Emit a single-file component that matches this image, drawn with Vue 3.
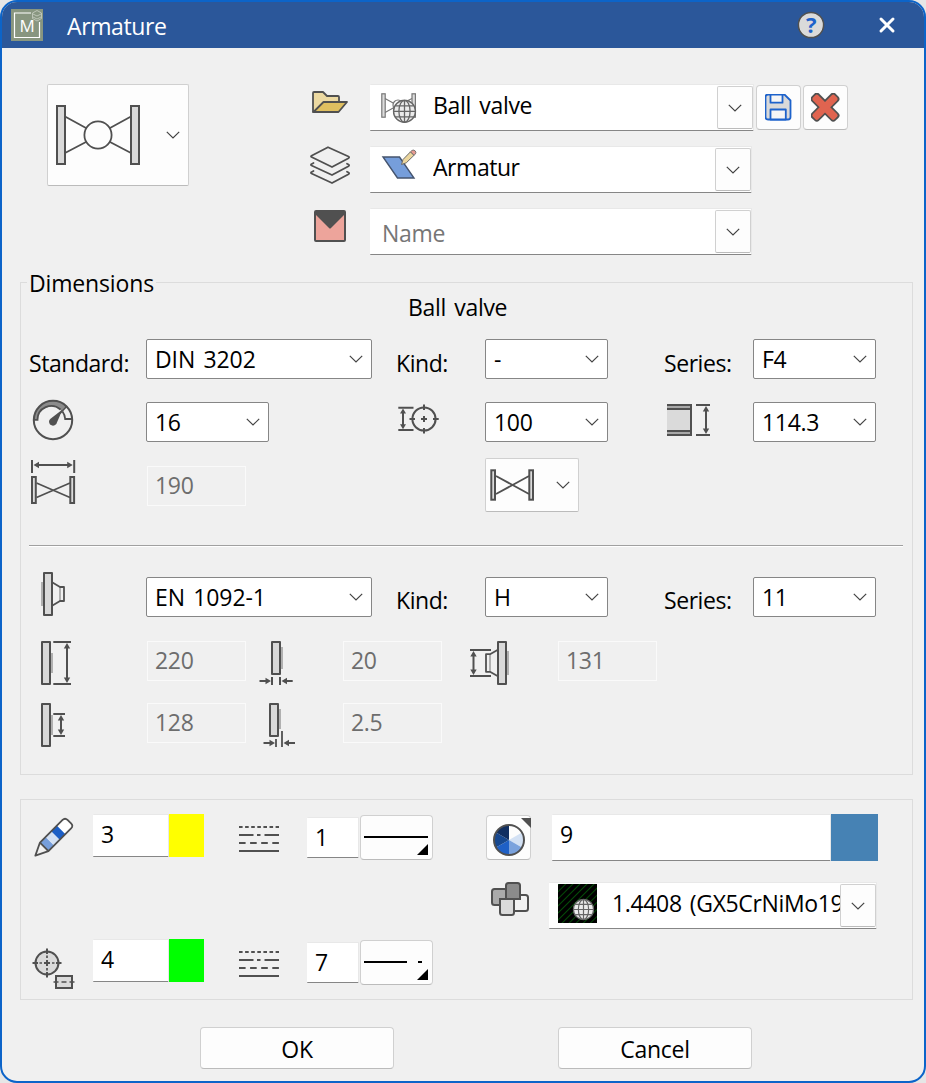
<template>
  <div class="dialog">
    <!-- Shapes used by several icons -->
    <svg class="defs" width="0" height="0">
      <symbol id="chevron" viewBox="0 0 14 8">
        <path d="M0.8 0.8 L7 7 L13.2 0.8" fill="none" stroke="#444" stroke-width="1.2" />
      </symbol>
      <symbol id="globe" viewBox="0 0 24 24">
        <circle cx="12" cy="12" r="11" fill="#ebebeb" stroke="#666" stroke-width="1.4" />
        <g fill="none" stroke="#666" stroke-width="1.3">
          <ellipse cx="12" cy="12" rx="5.6" ry="11" />
          <path d="M12 1 V23 M1 12 H23 M3 6.5 H21 M3 17.5 H21" />
        </g>
      </symbol>
      <symbol id="linetypes" viewBox="0 0 42 28">
        <g stroke="#505050" stroke-width="2">
          <path d="M1 2 H41" stroke-dasharray="3.6 2.5" />
          <path d="M1 10 H15.5 M19 10 H22.5 M26.5 10 H41" />
          <path d="M1 18 H41" stroke-dasharray="6.6 4.5" />
          <path d="M1 26 H41" />
        </g>
      </symbol>
      <pattern id="hatch" width="5" height="5" patternUnits="userSpaceOnUse" patternTransform="rotate(45)">
        <rect width="5" height="5" fill="#000" />
        <rect width="1" height="5" fill="#044a07" />
      </pattern>
    </svg>

    <header class="titlebar">
      <svg class="logo" width="32" height="32" viewBox="0 0 32 32">
        <rect width="32" height="32" fill="#889680" />
        <path d="M20 4 H3.5 V28.5 H28.5 V13" fill="none" stroke="#fff" stroke-width="1.2" />
        <g fill="none" stroke="#c3cbbd" stroke-width="0.9">
          <path d="M26 1.5 L30.5 4 V9.5 L26 12 L21.5 9.5 V4 Z" />
          <path d="M22 5 L26 7 L30 5 M22 8 L26 10 L30 8" />
        </g>
        <text x="16" y="22.7" text-anchor="middle" class="logo-text">M</text>
      </svg>
      <h1 class="title">{{ title }}</h1>
      <button class="title-button help">
        <svg width="28" height="28" viewBox="0 0 28 28">
          <circle cx="14" cy="14" r="12.6" fill="#dadada" stroke="#505050" stroke-width="1.5" />
          <text x="14" y="22" text-anchor="middle" class="help-text">?</text>
        </svg>
      </button>
      <button class="title-button close">
        <svg width="18" height="18" viewBox="0 0 18 18">
          <path d="M3 3 L15 15 M15 3 L3 15" stroke="#fff" stroke-width="3" stroke-linecap="round" />
        </svg>
      </button>
    </header>

    <section class="top">
      <button class="button preview">
        <svg width="104" height="64" viewBox="46 103 104 64">
          <g fill="#d9d9d9" stroke="#505050" stroke-width="2">
            <rect x="57" y="106" width="8" height="58" />
            <rect x="131" y="106" width="8" height="58" />
          </g>
          <g fill="none" stroke="#505050" stroke-width="1.8">
            <circle cx="98" cy="135" r="13.6" />
            <path d="M65 116.5 L86 128 M65 153 L86 142 M131 116.5 L110 128 M131 153 L110 142" />
          </g>
        </svg>
        <svg class="chevron"><use href="#chevron" /></svg>
      </button>

      <div class="sources">
        <div class="source">
          <svg class="source-icon" viewBox="300 84 70 47">
            <g stroke="#505050" stroke-width="1.8" stroke-linejoin="round">
              <path d="M313 112 V93 Q313 92 314 92 H323 L327 96 H338 Q339 96 339 97 V103 Z" fill="#ecd9a1" />
              <path d="M313.5 112 L323.5 102 H347 L338.5 112 Z" fill="#dfbf60" />
            </g>
          </svg>
          <div class="combo wide">
            <svg class="combo-icon" viewBox="370 85 63 45">
              <g fill="#dcdcdc" stroke="#777" stroke-width="1.2">
                <rect x="381.8" y="93.8" width="3.4" height="23.4" />
                <rect x="412" y="93.8" width="3.4" height="23.4" />
                <path d="M385 98.5 L395 104 M385 112.5 L395 107 M402 103.5 L412 98.5" />
                <circle cx="398" cy="105" r="5" fill="#fff" />
              </g>
              <use href="#globe" x="392.5" y="99.3" width="24" height="24" />
            </svg>
            <span class="combo-text">{{ component }}</span>
            <button class="button drop"><svg class="chevron"><use href="#chevron" /></svg></button>
          </div>
          <button class="button tool">
            <svg width="28" height="28" viewBox="765 94 28 28">
              <g stroke="#1d62cb" stroke-width="1.8" stroke-linejoin="round">
                <path d="M768 94.5 H784.5 L790.5 100.5 V117 Q790.5 119.5 788 119.5 H768 Q765.5 119.5 765.5 117 V97 Q765.5 94.5 768 94.5 Z" fill="#d9d9d9" />
                <path d="M770.5 94.5 H782.5 V102.7 H770.5 Z" fill="#f6f6f6" />
                <path d="M770.5 109.5 H785.8 V119.5 H770.5 Z" fill="#f6f6f6" />
              </g>
            </svg>
          </button>
          <button class="button tool">
            <svg width="30" height="30" viewBox="-14 -14.2 30 30">
              <g fill="#505050">
                <rect x="-17" y="-5.4" width="34" height="10.8" rx="3.5" transform="rotate(45)" />
                <rect x="-17" y="-5.4" width="34" height="10.8" rx="3.5" transform="rotate(-45)" />
              </g>
              <g fill="#e06450">
                <rect x="-15.3" y="-3.7" width="30.6" height="7.4" rx="2" transform="rotate(45)" />
                <rect x="-15.3" y="-3.7" width="30.6" height="7.4" rx="2" transform="rotate(-45)" />
              </g>
            </svg>
          </button>
        </div>

        <div class="source">
          <svg class="source-icon" viewBox="300 146 70 47">
            <g fill="none" stroke="#505050" stroke-width="1.8" stroke-linejoin="round" stroke-linecap="round">
              <path d="M328 147.2 L348.5 156.5 Q349.8 157.3 348.5 158.2 L332 167 L311.5 157 Q310.5 156.5 311.5 155.8 Z" />
              <path d="M313.5 163 L311.3 164.2 Q310.5 165 311.5 165.5 L332 175 L348.5 166.2 Q349.8 165.2 348.5 164.5 L347 163.7" />
              <path d="M313.5 171 L311.3 172.2 Q310.5 173 311.5 173.5 L332 183 L348.5 174.2 Q349.8 173.2 348.5 172.5 L347 171.7" />
            </g>
          </svg>
          <div class="combo">
            <svg class="combo-icon" viewBox="370 147 63 45">
              <path d="M383 157 H399.5 L414 178 H397.5 Z" fill="#769edb" stroke="#45546e" stroke-width="1.4" />
              <path d="M401.5 164.5 L403 159.5 L410.5 151.8 L414 155.3 L406.3 162.8 Z" fill="#ecd69d" stroke="#6b6b6b" stroke-width="1" />
              <path d="M410.5 151.8 L412 150.4 Q414 149.5 415.3 151 Q416.5 152.5 415.4 153.9 L414 155.3 Z" fill="#e79a90" stroke="#6b6b6b" stroke-width="0.9" />
            </svg>
            <span class="combo-text layer">{{ layer }}</span>
            <button class="button drop"><svg class="chevron"><use href="#chevron" /></svg></button>
          </div>
        </div>

        <div class="source">
          <svg class="source-icon" viewBox="300 208 70 47">
            <rect x="315" y="211" width="30" height="30" rx="1" fill="#eda49b" stroke="#505050" stroke-width="2" />
            <path d="M315 211 H345 V214 L331 228 Q330 229 329 228 L315 214 Z" fill="#505050" />
          </svg>
          <div class="combo">
            <input v-model="name" class="name-input" placeholder="Name" />
            <button class="button drop"><svg class="chevron"><use href="#chevron" /></svg></button>
          </div>
        </div>
      </div>
    </section>

    <fieldset class="group dimensions">
      <legend>Dimensions</legend>
      <div class="subtitle">{{ component }}</div>

      <div class="row">
        <span class="label">Standard:</span>
        <div class="select long">{{ body.standard }}<svg class="chevron"><use href="#chevron" /></svg></div>
        <span class="label">Kind:</span>
        <div class="select">{{ body.kind }}<svg class="chevron"><use href="#chevron" /></svg></div>
        <span class="label">Series:</span>
        <div class="select">{{ body.series }}<svg class="chevron"><use href="#chevron" /></svg></div>
      </div>

      <div class="row pressure">
        <svg class="icon" width="60" height="40" viewBox="29 402 60 40">
          <path d="M34 420 A19 19 0 0 1 66.5 406 L61.5 411 A13.8 13.8 0 0 0 37.7 420 Z" fill="#8c8c8c" />
          <g fill="none" stroke="#505050" stroke-width="2">
            <circle cx="53" cy="420" r="19.2" />
            <path d="M34 419.8 H37.5 A13.8 13.8 0 0 1 60.5 409.5 M62.5 411.5 Q65 415 65.2 419 H72" stroke-width="1.8" />
            <path d="M67 406 L60 413.5" stroke-width="1.6" />
          </g>
          <path d="M62.5 409.5 L56.3 424 Q53.5 427 50 424.5 Q47.8 421 50.5 418.8 Z" fill="#505050" />
        </svg>
        <div class="select">{{ body.pressure }}<svg class="chevron"><use href="#chevron" /></svg></div>
        <svg class="icon" width="60" height="40" viewBox="396 402 60 40">
          <g fill="none" stroke="#505050" stroke-width="2">
            <path d="M398.3 407.7 H413.5 M398.3 430 H413.5 M403 412 V426" />
            <circle cx="424" cy="419" r="11.6" />
            <path d="M424 404.5 V410 M424 428 V433.5 M409.5 419 H415 M433 419 H438.7 M424 416 V422 M421 419 H427" />
          </g>
          <path d="M403 408.5 L406 413.5 H400 Z M403 429.3 L406 424.3 H400 Z" fill="#505050" />
        </svg>
        <div class="select">{{ body.diameter }}<svg class="chevron"><use href="#chevron" /></svg></div>
        <svg class="icon" width="60" height="40" viewBox="664 402 60 40">
          <rect x="667" y="404" width="24" height="32" fill="#dadada" />
          <path d="M667 407 H690 M667 433 H690" stroke="#a8a8a8" stroke-width="2" />
          <g fill="none" stroke="#505050" stroke-width="2">
            <path d="M667 405 H691 V435 H667 M667 409 H690 M667 431 H690" />
            <path d="M696 405 H710 M696 435 H710 M706 410 V430" />
          </g>
          <path d="M706 406 L709.2 411.5 H702.8 Z M706 434 L709.2 428.5 H702.8 Z" fill="#505050" />
        </svg>
        <div class="select">{{ body.outer }}<svg class="chevron"><use href="#chevron" /></svg></div>
      </div>

      <div class="row length">
        <svg class="icon" width="60" height="54" viewBox="29 458 60 54">
          <g fill="none" stroke="#505050" stroke-width="2">
            <path d="M32 460 V473 M74.2 460 V473 M38 465 H69" />
            <path d="M36.5 483 L70 497.5 M36.5 497.5 L70 483" stroke-width="1.7" />
            <rect x="32" y="477" width="3.8" height="26" fill="#dcdcdc" />
            <rect x="70.3" y="477" width="3.8" height="26" fill="#dcdcdc" />
          </g>
          <path d="M33.5 465 L39 461.7 V468.3 Z M72.7 465 L67.2 461.7 V468.3 Z" fill="#505050" />
        </svg>
        <div class="readonly">{{ body.length }}</div>
        <span></span>
        <button class="button variant">
          <svg width="54" height="40" viewBox="486 465 54 40">
            <g fill="#dcdcdc" stroke="#505050" stroke-width="2">
              <path d="M496 476 L529 494 M496 494 L529 476" stroke-width="1.8" />
              <rect x="491.3" y="470.3" width="3.7" height="29.4" />
              <rect x="529.3" y="470.3" width="3.7" height="29.4" />
            </g>
          </svg>
          <svg class="chevron"><use href="#chevron" /></svg>
        </button>
      </div>

      <hr class="divider" />

      <div class="row flange">
        <svg class="icon" width="60" height="40" viewBox="29 577 60 40">
          <rect x="41" y="582" width="2.5" height="24" fill="#b0b0b0" />
          <path d="M60 587 V601" stroke="#b0b0b0" stroke-width="2" />
          <g fill="none" stroke="#505050" stroke-width="2" stroke-linejoin="round">
            <rect x="44" y="573" width="8" height="42" fill="#d9d9d9" />
            <path d="M52.5 582.5 L60 587 H64 V601 H60 L52.5 605.5" stroke-width="1.8" />
          </g>
        </svg>
        <div class="select long">{{ flange.standard }}<svg class="chevron"><use href="#chevron" /></svg></div>
        <span class="label">Kind:</span>
        <div class="select">{{ flange.kind }}<svg class="chevron"><use href="#chevron" /></svg></div>
        <span class="label">Series:</span>
        <div class="select">{{ flange.series }}<svg class="chevron"><use href="#chevron" /></svg></div>
      </div>

      <div class="row sizes">
        <svg class="icon" width="60" height="40" viewBox="29 641 60 40">
          <rect x="51" y="653" width="2" height="20" fill="#b0b0b0" />
          <g fill="none" stroke="#505050" stroke-width="2" stroke-linejoin="round">
            <rect x="42" y="642" width="8" height="42" fill="#d9d9d9" />
            <path d="M53.3 642 H71 M53.3 684 H71 M67 647 V679" />
          </g>
          <path d="M67 643 L70.2 648.5 H63.8 Z M67 683 L70.2 677.5 H63.8 Z" fill="#505050" />
        </svg>
        <div class="readonly">{{ flange.outer }}</div>
        <svg class="icon" width="60" height="40" viewBox="259 641 60 40">
          <rect x="281" y="647" width="2" height="22" fill="#b0b0b0" />
          <g fill="none" stroke="#505050" stroke-width="2" stroke-linejoin="round">
            <rect x="272" y="642" width="8" height="32" fill="#d9d9d9" />
            <path d="M272 677 V685 M280 677 V685 M259.5 681 H267 M285 681 H292.7" />
          </g>
          <path d="M271 681 L265.5 677.8 V684.2 Z M281.5 681 L287 677.8 V684.2 Z" fill="#505050" />
        </svg>
        <div class="readonly">{{ flange.thickness }}</div>
        <svg class="icon" width="60" height="40" viewBox="469 641 60 40">
          <rect x="507" y="651" width="2" height="24" fill="#b0b0b0" />
          <path d="M490 655 V671" stroke="#b0b0b0" stroke-width="2" />
          <g fill="none" stroke="#505050" stroke-width="2" stroke-linejoin="round">
            <rect x="498" y="642" width="8" height="42" fill="#d9d9d9" />
            <path d="M497.5 650 L490 654.2 H486 V671.8 H490 L497.5 676" stroke-width="1.8" />
            <path d="M470 650 H491 M470 676 H491 M473.5 655 V671" />
          </g>
          <path d="M473.5 651 L476.7 656.5 H470.3 Z M473.5 675 L476.7 669.5 H470.3 Z" fill="#505050" />
        </svg>
        <div class="readonly">{{ flange.neck }}</div>
      </div>

      <div class="row sizes">
        <svg class="icon" width="60" height="40" viewBox="29 703 60 40">
          <rect x="51" y="715" width="2" height="20" fill="#b0b0b0" />
          <g fill="none" stroke="#505050" stroke-width="2" stroke-linejoin="round">
            <rect x="42" y="704" width="8" height="42" fill="#d9d9d9" />
            <path d="M53.3 714 H65 M53.3 736 H65 M61 719 V731" />
          </g>
          <path d="M61 715 L64.2 720.5 H57.8 Z M61 735 L64.2 729.5 H57.8 Z" fill="#505050" />
        </svg>
        <div class="readonly">{{ flange.facing }}</div>
        <svg class="icon" width="60" height="40" viewBox="259 703 60 40">
          <rect x="279" y="709" width="2" height="20" fill="#b0b0b0" />
          <g fill="none" stroke="#505050" stroke-width="2" stroke-linejoin="round">
            <rect x="270" y="704" width="8" height="32" fill="#d9d9d9" />
            <path d="M276 739 V747 M282 731 V747 M263.5 743 H271 M288 743 H295" stroke-width="1.8" />
          </g>
          <path d="M275 743 L269.5 739.8 V746.2 Z M283.5 743 L289 739.8 V746.2 Z" fill="#505050" />
        </svg>
        <div class="readonly">{{ flange.step }}</div>
      </div>
    </fieldset>

    <section class="group styles">
      <div class="pens">
        <div v-for="pen in pens" :key="pen.id" class="pen">
          <svg v-if="pen.id === 'outline'" class="icon" width="63" height="46" viewBox="30 814 63 46">
            <g transform="translate(35 856) rotate(-45)">
              <rect x="13" y="-6" width="8" height="12" fill="#769edb" />
              <rect x="21" y="-6" width="8" height="12" fill="#d3e1f4" />
              <rect x="29" y="-6" width="8" height="12" fill="#1c5fc6" />
              <path d="M37 -6 H45 Q48.5 -6 48.5 -2.5 V2.5 Q48.5 6 45 6 H37 Z" fill="#fff" />
              <path d="M0.5 0 L13 -6 H45 Q48.5 -6 48.5 -2.5 V2.5 Q48.5 6 45 6 H13 Z M13 -6 V6" fill="none" stroke="#505050" stroke-width="1.8" stroke-linejoin="round" />
            </g>
          </svg>
          <svg v-else class="icon" width="63" height="46" viewBox="30 939 63 46">
            <g fill="#dadada" stroke="#505050" stroke-width="2">
              <circle cx="47" cy="963" r="11.5" />
              <rect x="56" y="976" width="16" height="12" />
              <path d="M47 948.5 V954 M47 972 V977.5 M32.5 963 H38 M56 963 H61.5 M44 963 H50 M47 960 V966" />
              <path d="M47 955.5 V958 M47 968 V970.5 M39.5 963 H42 M52 963 H54.5 M53.5 982 H58.5 M61.5 982 H66.5 M69.5 982 H74.5" stroke-width="1.7" />
            </g>
          </svg>
          <div class="field color-field"><input v-model="pen.color" /></div>
          <span class="swatch" :style="{ backgroundColor: pen.hex }"></span>
          <svg class="linetypes"><use href="#linetypes" /></svg>
          <div class="field type-field"><input v-model="pen.type" /></div>
          <button class="button line-button">
            <svg width="71" height="43" viewBox="361 816 71 43">
              <path :d="pen.line" stroke="#000" stroke-width="2" />
              <path d="M428 844 V855 H417 Z" fill="#000" />
            </svg>
          </button>
        </div>
      </div>

      <div class="fills">
        <div class="fill-row">
          <button class="button tool wheel">
            <svg width="45" height="45" viewBox="486 815 45 45">
              <g transform="translate(509 840)">
                <path
                  v-for="(shade, i) in shades"
                  :key="shade"
                  d="M0 0 V-15 A15 15 0 0 1 12.99 -7.5 Z"
                  :fill="shade"
                  :transform="`rotate(${i * 60})`"
                />
                <circle r="15" fill="none" stroke="#505050" stroke-width="2" />
              </g>
              <path d="M521 818 H531 V828 Z" fill="#505050" />
            </svg>
          </button>
          <div class="field fill-field"><input v-model="fillColor" /></div>
          <span class="swatch large"></span>
        </div>
        <div class="fill-row material">
          <svg class="icon" width="63" height="47" viewBox="486 882 63 47">
            <g stroke="#505050" stroke-width="2">
              <rect x="492" y="889" width="15" height="16" rx="2.5" fill="#aaa" />
              <rect x="512" y="895" width="16" height="16" rx="2.5" fill="#f2f2f2" />
              <path d="M506 899 V885.5 Q506 883 508.5 883 H517.5 Q520 883 520 885.5 V899 Z" fill="#8b8b8b" />
              <path d="M500 899 H514 V912.5 Q514 915 511.5 915 H502.5 Q500 915 500 912.5 Z" fill="#dadada" />
            </g>
          </svg>
          <div class="combo material-combo">
            <svg class="material-icon" width="39" height="39" viewBox="0 0 39 39">
              <rect width="39" height="39" fill="url(#hatch)" />
              <use href="#globe" x="14.5" y="14.5" width="22" height="22" />
            </svg>
            <span class="combo-text">{{ material }}</span>
            <button class="button drop"><svg class="chevron"><use href="#chevron" /></svg></button>
          </div>
        </div>
      </div>
    </section>

    <footer class="actions">
      <button class="button action">OK</button>
      <button class="button action">Cancel</button>
    </footer>
  </div>
</template>

<script setup>
import { ref, reactive } from "vue";

const title = "Armature";
const component = ref("Ball valve");
const layer = ref("Armatur");
const name = ref("");

const body = reactive({
  standard: "DIN 3202",
  kind: "-",
  series: "F4",
  pressure: "16",
  diameter: "100",
  outer: "114.3",
  length: "190",
});

const flange = reactive({
  standard: "EN 1092-1",
  kind: "H",
  series: "11",
  outer: "220",
  thickness: "20",
  neck: "131",
  facing: "128",
  step: "2.5",
});

const pens = reactive([
  { id: "outline", color: "3", hex: "#ffff00", type: "1", line: "M364 837 H428" },
  { id: "center", color: "4", hex: "#00ff00", type: "7", line: "M364 837 H407 M418 837 H422" },
]);

const shades = ["#fcfcfc", "#d3e1f4", "#7aa2dd", "#1f60c6", "#17488f", "#112f61"];
const fillColor = ref("9");
const material = ref("1.4408 (GX5CrNiMo19");
</script>

<style>
body {
  background: #e6e6e6;
}
</style>

<style scoped>
.dialog {
  box-sizing: border-box;
  width: 926px;
  height: 1083px;
  border: 2px solid #0c64c9;
  border-radius: 17px;
  background: #f0f0f0;
  overflow: hidden;
  display: flex;
  flex-direction: column;
  font-family: "Open Sans", "Noto Sans", sans-serif;
  font-size: 23px;
  line-height: 30px;
  letter-spacing: -0.3px;
  word-spacing: 2.5px;
  color: #000;
}

.dialog *,
.dialog *::before {
  box-sizing: border-box;
}

.defs {
  position: absolute;
}

button,
input {
  font: inherit;
  letter-spacing: inherit;
  color: inherit;
  padding: 0;
  margin: 0;
  border: none;
  background: none;
  outline: none;
}

input {
  width: 100%;
  min-width: 0;
}

svg {
  display: block;
  flex: none;
}

.titlebar {
  flex: none;
  height: 46px;
  display: flex;
  align-items: center;
  padding-left: 9px;
  background: #2b579a;
  color: #fff;
}

.title-button svg {
  overflow: visible;
}

.logo-text {
  font-size: 17px;
  fill: #fff;
}

.title {
  flex: 1;
  margin: 2px 0 0 24px;
  font-size: 23px;
  font-weight: 400;
  letter-spacing: -0.4px;
}

.help {
  margin-right: 53px;
}

.close {
  margin-right: 28px;
}

.help-text {
  font-size: 22px;
  line-height: 22px;
  font-weight: 700;
  fill: #1d62cb;
}

.chevron {
  width: 14px;
  height: 8px;
}

.button {
  flex: none;
  display: flex;
  align-items: center;
  justify-content: center;
  border: 1px solid #d0d0d0;
  border-bottom-color: #bbb;
  border-radius: 4px;
  background: #fdfdfd;
}

.top {
  flex: none;
  height: 219px;
  display: flex;
  padding: 36px 0 0 45px;
}

.preview {
  width: 142px;
  height: 102px;
  border-radius: 2px;
  justify-content: flex-start;
}

.preview .chevron {
  margin-left: 16px;
}

.preview svg:first-child {
  margin-left: -2px;
}

.sources {
  display: flex;
  flex-direction: column;
  gap: 15px;
  margin-left: 111px;
}

.source {
  display: flex;
  align-items: center;
}

.source-icon {
  width: 70px;
  height: 47px;
}

.combo {
  display: flex;
  align-items: center;
  width: 382px;
  height: 47px;
  border: 1px solid #e8e8e8;
  border-left: none;
  border-bottom-color: #868686;
  border-radius: 1px;
  background: #fff;
}

.combo.wide {
  width: 384px;
}

.combo-icon {
  width: 63px;
  height: 45px;
}

.combo-text {
  flex: 1;
  min-width: 0;
  overflow: hidden;
  white-space: nowrap;
  padding-bottom: 5px;
}

.combo-text.layer {
  letter-spacing: -0.45px;
}

.drop {
  width: 36px;
  height: 43px;
  border-radius: 2px;
}

.name-input {
  flex: 1;
  padding: 3px 0 0 12px;
}

.name-input::placeholder {
  color: #767676;
  opacity: 1;
}

.tool {
  width: 45px;
  height: 45px;
  margin-left: 2px;
}

.group {
  flex: none;
  width: 893px;
  margin: 0 0 0 18px;
  border: 1px solid #dcdcdc;
  padding: 0;
}

.dimensions {
  height: 508px;
  padding: 0 9px 0 8px;
}

.dimensions legend {
  padding: 2px 2px 0 2px;
  margin-left: -2px;
  line-height: 28px;
  letter-spacing: -0.15px;
}

.subtitle {
  margin: -5px 0 0 379px;
  height: 47px;
}

.row {
  display: grid;
  grid-template-columns: 117px 250px 89px 179px 89px 123px;
  height: 40px;
}

.icon {
  overflow: visible;
}

.label {
  padding-top: 9px;
  letter-spacing: -0.45px;
}

.flange .label {
  padding-top: 8px;
}

.select {
  width: 123px;
  height: 40px;
  display: flex;
  align-items: center;
  justify-content: space-between;
  padding: 0 8.5px 0 8px;
  border: 1px solid #868686;
  border-radius: 2px;
  background: #fff;
}

.select.long {
  width: 226px;
  letter-spacing: -0.1px;
}

.readonly {
  width: 99px;
  height: 40px;
  padding: 3px 0 0 7px;
  border: 1px solid #fafafa;
  color: #6d6d6d;
  margin-left: 1px;
}

.pressure {
  margin-top: 23px;
}

.length {
  margin-top: 16px;
  height: 54px;
}

.length .readonly {
  margin-top: 8px;
}

.variant {
  width: 94px;
  height: 54px;
  border-radius: 2px;
  justify-content: flex-start;
}

.variant .chevron {
  margin-left: 16px;
}

.divider {
  height: 2px;
  margin: 33px 0 30px;
  border: none;
  border-top: 1px solid #a0a0a0;
  border-bottom: 1px solid #fff;
}

.sizes {
  grid-template-columns: 117px 113px 83px 127px 88px 101px;
  margin-top: 24px;
}

.sizes + .sizes {
  margin-top: 22px;
}

.styles {
  height: 201px;
  margin-top: 24px;
  display: flex;
  padding: 14px 0 0 9px;
}

.pens {
  display: flex;
  flex-direction: column;
  gap: 79px;
}

.pen {
  display: flex;
  height: 46px;
}

.field {
  display: flex;
  align-items: center;
  border: 1px solid #e8e8e8;
  border-left: none;
  border-bottom-color: #868686;
  border-radius: 1px;
  background: #fff;
  padding: 0 0 3px 8px;
}

.color-field {
  width: 76px;
  height: 43px;
}

.swatch {
  width: 35px;
  height: 43px;
}

.linetypes {
  width: 42px;
  height: 28px;
  margin: 11px 27px 0 34px;
}

.type-field {
  width: 52px;
  height: 41px;
  margin-top: 3px;
  padding-bottom: 1px;
}

.line-button {
  width: 73px;
  height: 45px;
  margin: 1px 0 0 1px;
}

.fills {
  margin-left: 53px;
}

.fill-row {
  display: flex;
}

.wheel {
  margin: 1px 21px 0 0;
}

.wheel svg {
  overflow: visible;
}

.fill-field {
  width: 279px;
  height: 47px;
}

.fill-field input {
  margin-bottom: 4px;
}

.swatch.large {
  width: 47px;
  height: 47px;
  background: #4682b4;
}

.material {
  margin-top: 21px;
}

.material-combo {
  width: 328px;
}

.material-combo .combo-text {
  letter-spacing: -0.35px;
}

.material-icon {
  margin: 0 15px 4px 9px;
}

.actions {
  display: flex;
  gap: 164px;
  padding: 27px 0 0 198px;
}

.action {
  width: 194px;
  height: 42px;
  padding-top: 1px;
}
</style>
